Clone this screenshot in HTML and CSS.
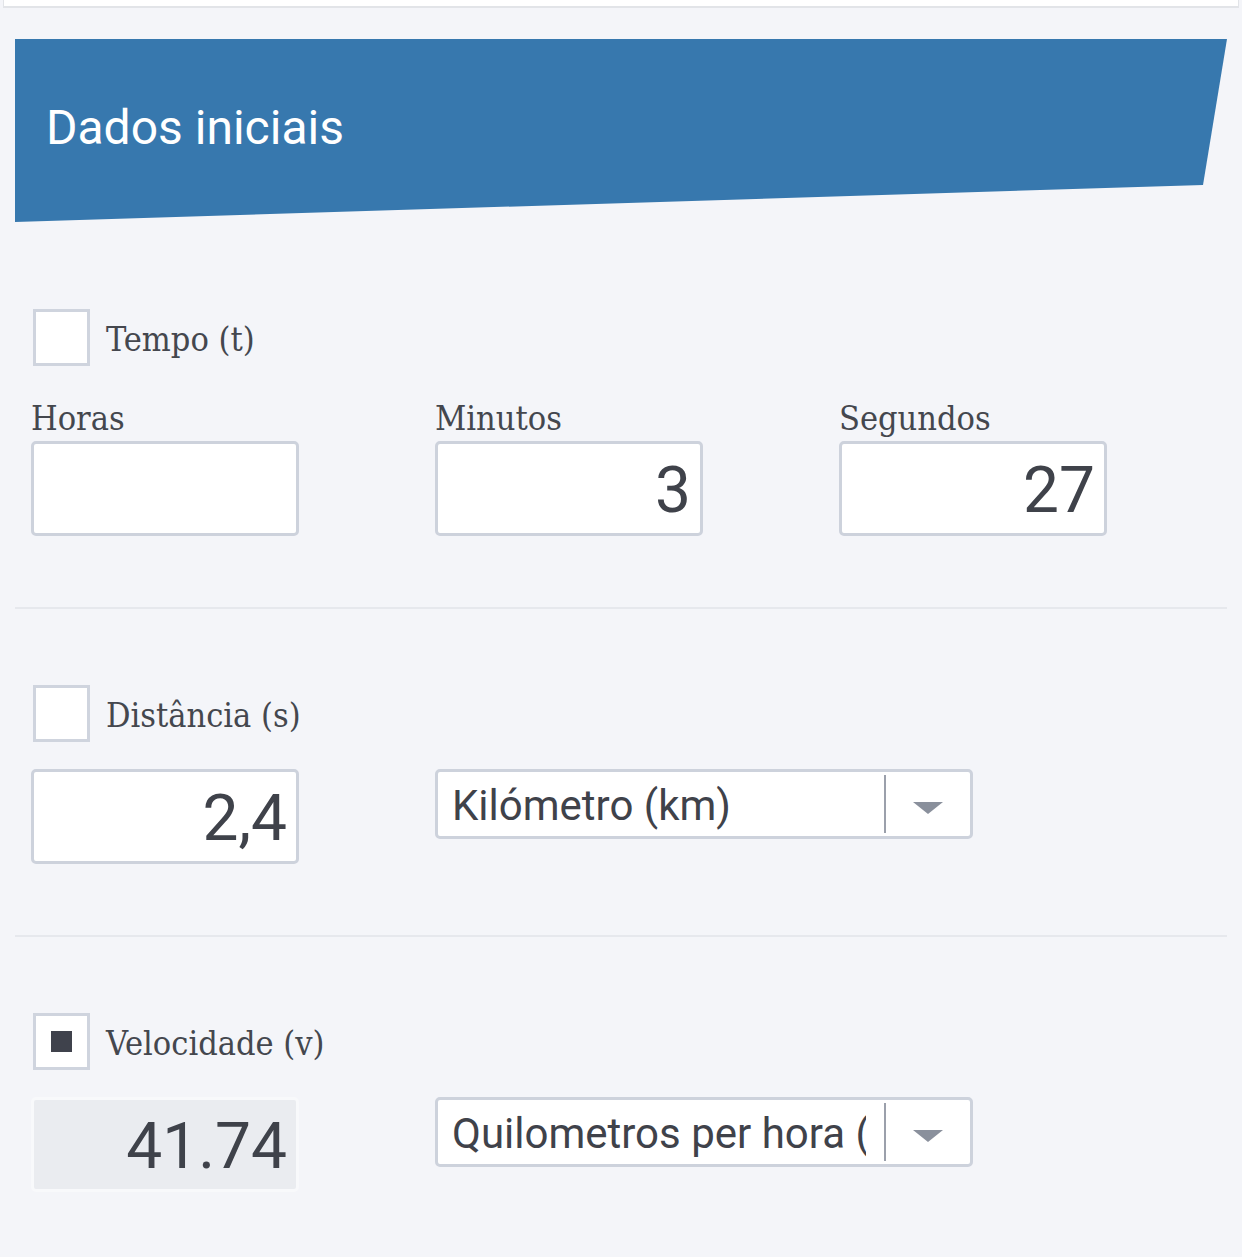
FILE: index.html
```html
<!DOCTYPE html>
<html lang="pt">
<head>
<meta charset="utf-8">
<title>Dados iniciais</title>
<link rel="stylesheet" href="styles.css">
</head>
<body>
<div class="topbar"></div>
<main class="panel">
  <div class="banner"><h1 class="banner-title">Dados iniciais</h1></div>

  <section class="group group-first">
    <div class="check">
      <span class="box"></span>
      <span class="check-label">Tempo (t)</span>
    </div>
    <div class="time-grid">
      <div class="field">
        <span class="sub-label">Horas</span>
        <div class="input"></div>
      </div>
      <div class="field">
        <span class="sub-label">Minutos</span>
        <div class="input">3</div>
      </div>
      <div class="field">
        <span class="sub-label">Segundos</span>
        <div class="input">27</div>
      </div>
    </div>
  </section>

  <div class="divider"></div>

  <section class="group">
    <div class="check">
      <span class="box"></span>
      <span class="check-label">Distância (s)</span>
    </div>
    <div class="value-row">
      <div class="input">2,4</div>
      <div class="select">
        <span class="select-value">Kilómetro (km)</span>
        <span class="select-sep"></span>
        <span class="select-arrow"><span class="triangle"></span></span>
      </div>
    </div>
  </section>

  <div class="divider"></div>

  <section class="group">
    <div class="check">
      <span class="box box-checked"><span class="box-mark"></span></span>
      <span class="check-label">Velocidade (v)</span>
    </div>
    <div class="value-row">
      <div class="input input-output">41.74</div>
      <div class="select">
        <span class="select-value">Quilometros per hora (km/h)</span>
        <span class="select-sep"></span>
        <span class="select-arrow"><span class="triangle"></span></span>
      </div>
    </div>
  </section>
</main>
</body>
</html>
```

FILE: styles.css
```css
* { box-sizing: border-box; }

html, body {
  margin: 0;
  padding: 0;
  background: #f4f5f9;
}

body {
  font-family: Roboto, "Liberation Sans", sans-serif;
  color: #464950;
}

.topbar {
  height: 8px;
  background: #ffffff;
  border-bottom: 2px solid #e2e4e8;
  margin: 0 3px;
  border-left: 1px solid #e2e4e8;
  border-right: 1px solid #e2e4e8;
}

.panel {
  margin: 31px 15px 0 15px;
  width: 1212px;
}

.banner {
  height: 183px;
  background: #3778ae;
  clip-path: polygon(0 0, 100% 0, calc(100% - 24px) 146px, 0 100%);
  padding: 65px 0 0 31px;
}

.banner-title {
  margin: 0;
  font-family: Roboto, sans-serif;
  font-weight: 400;
  font-size: 48px;
  line-height: 48px;
  color: #ffffff;
}

.group {
  padding: 76px 0 71px 16px;
}

.group-first {
  padding-top: 87px;
}

.check {
  display: flex;
  align-items: center;
  height: 57px;
  margin-left: 2px;
}

.box {
  width: 57px;
  height: 57px;
  border: 3px solid #cfd4de;
  background: #ffffff;
  display: flex;
  align-items: center;
  justify-content: center;
  flex: none;
}

.box-mark {
  width: 21px;
  height: 21px;
  background: #3f424c;
}

.check-label {
  margin-left: 16px;
  font-family: "DejaVu Serif Condensed", "DejaVu Serif", serif;
  font-stretch: condensed;
  font-size: 34px;
  line-height: 40px;
  color: #44474e;
  padding-top: 2px;
}

.time-grid {
  display: grid;
  grid-template-columns: repeat(3, 268px);
  column-gap: 136px;
  margin-top: 34px;
}

.field {
  display: flex;
  flex-direction: column;
}

.sub-label {
  font-family: "DejaVu Serif Condensed", "DejaVu Serif", serif;
  font-stretch: condensed;
  font-size: 34px;
  line-height: 36px;
  color: #44474e;
  margin-bottom: 5px;
}

.input {
  width: 268px;
  height: 95px;
  border: 3px solid #cdd2dc;
  border-radius: 5px;
  background: #ffffff;
  font-family: Roboto, sans-serif;
  font-size: 64px;
  line-height: 89px;
  text-align: right;
  padding: 2px 9px 0 0;
  color: #3f424a;
}

.input-output {
  background: #eaecf0;
  border-color: #f8f9fb;
}

.value-row {
  display: grid;
  grid-template-columns: 268px 538px;
  column-gap: 136px;
  align-items: start;
  margin-top: 27px;
}

.select {
  width: 538px;
  height: 70px;
  border: 3px solid #cdd2dc;
  border-radius: 5px;
  background: #ffffff;
  display: flex;
  align-items: stretch;
}

.select-value {
  flex: 1;
  min-width: 0;
  overflow: hidden;
  white-space: nowrap;
  margin: 0 18px 0 14px;
  font-family: Roboto, sans-serif;
  font-size: 42px;
  line-height: 64px;
  padding-top: 2px;
  color: #3f424a;
}

.select-sep {
  width: 2px;
  background: #9ba0ab;
  margin: 3px 0;
  flex: none;
}

.select-arrow {
  width: 84px;
  flex: none;
  display: flex;
  align-items: center;
  justify-content: center;
  padding-top: 8px;
}

.triangle {
  width: 0;
  height: 0;
  border-left: 15px solid transparent;
  border-right: 15px solid transparent;
  border-top: 12px solid #8a909c;
}

.divider {
  height: 2px;
  background: #e6e8ed;
}
```
